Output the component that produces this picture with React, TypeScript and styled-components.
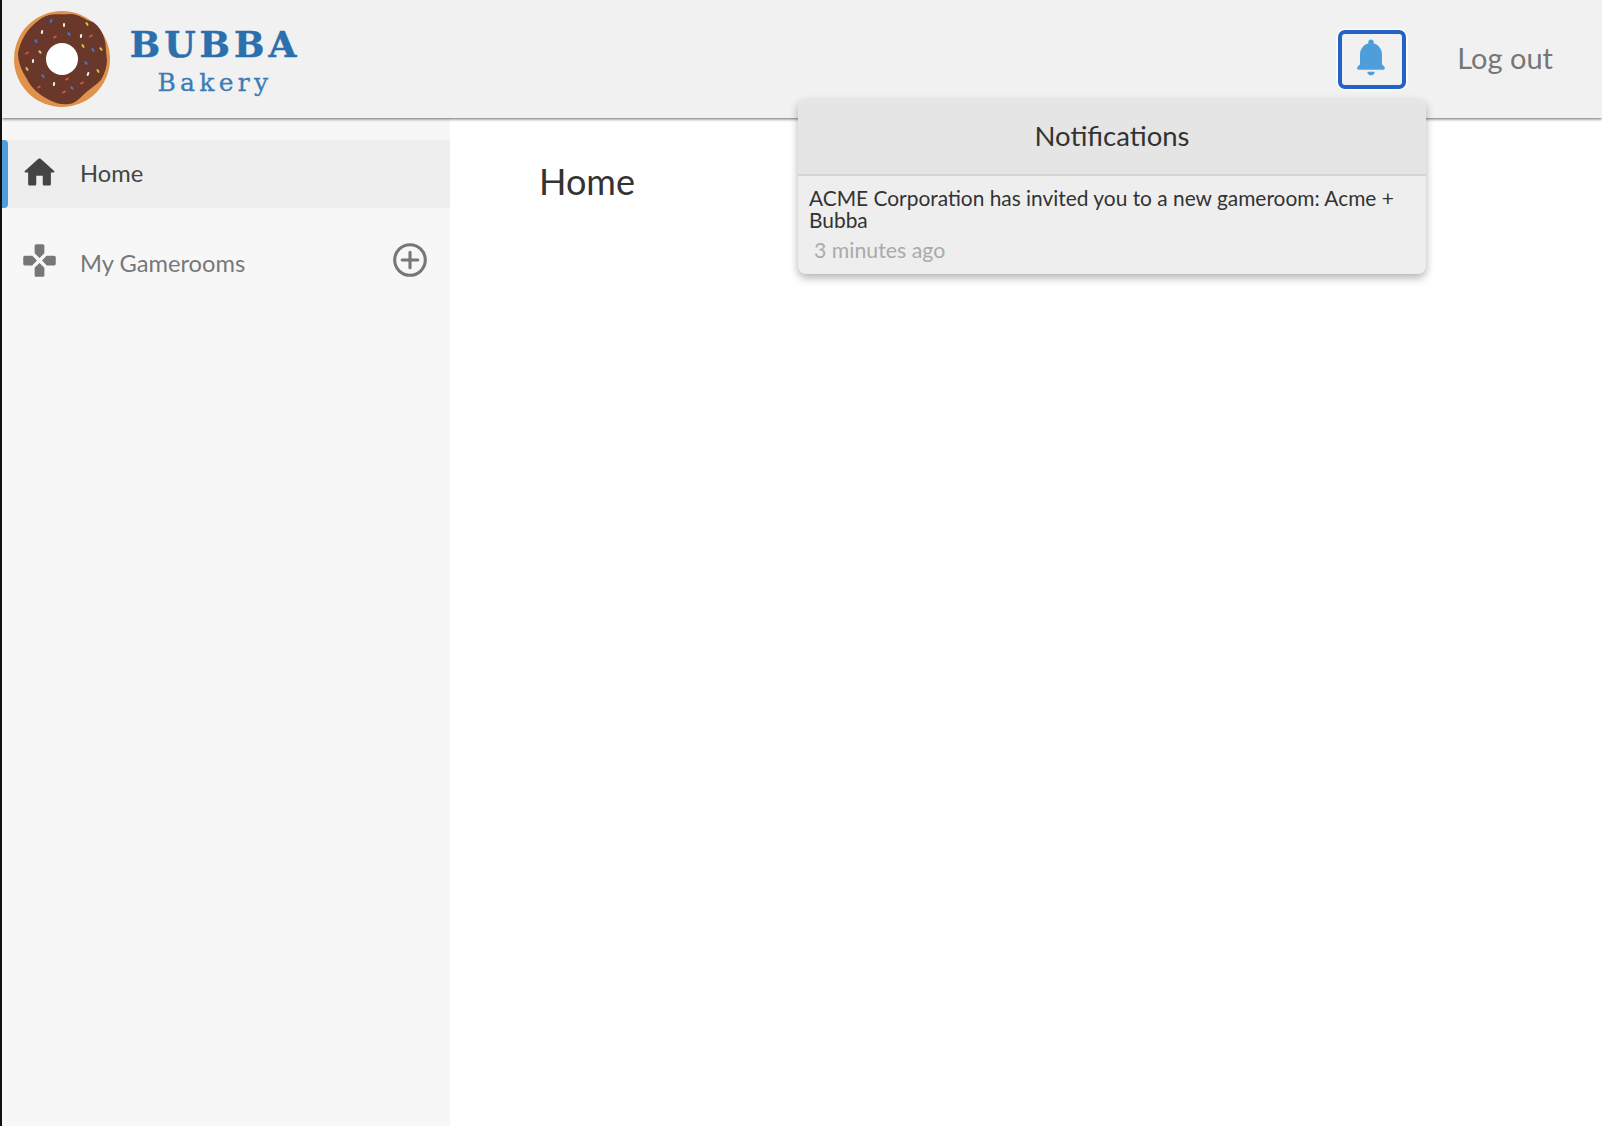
import React from "react";
import styled, { createGlobalStyle } from "styled-components";

const Global = createGlobalStyle`
  html, body { margin: 0; padding: 0; height: 100%; background: #fff; }
  body { font-family: Lato, "Open Sans", sans-serif; color: #333; }
  #root { min-height: 100%; }
`;

const Page = styled.div`
  width: 1602px;
  height: 1126px;
  overflow: hidden;
  border-left: 2px solid #111;
  box-sizing: border-box;
  display: flex;
  flex-direction: column;
`;

const Header = styled.header`
  position: relative;
  z-index: 2;
  height: 118px;
  flex: none;
  box-sizing: border-box;
  background: #f1f1f1;
  box-shadow: 0 1px 3px rgba(0, 0, 0, 0.6);
  display: flex;
  align-items: center;
  padding: 0 49px 0 12px;
`;

const Brand = styled.div`
  display: flex;
  align-items: center;
  gap: 20px;
`;

const BrandText = styled.div`
  display: flex;
  flex-direction: column;
  align-items: center;
  color: #2b6fac;
  width: 170px;
  padding-top: 3px;
`;

const BrandName = styled.div`
  font-family: "DejaVu Serif", "Liberation Serif", serif;
  font-weight: 700;
  font-size: 36px;
  line-height: 40px;
  letter-spacing: 4px;
  -webkit-text-stroke: 0.5px #2b6fac;
  white-space: nowrap;
`;

const BrandSub = styled.div`
  font-family: "DejaVu Serif", "Liberation Mono", serif;
  font-size: 25px;
  line-height: 28px;
  margin-top: 5px;
  letter-spacing: 4.3px;
  -webkit-text-stroke: 0.3px #3a7cb8;
  color: #3a7cb8;
`;

const HeaderActions = styled.div`
  margin-left: auto;
  display: flex;
  align-items: center;
  gap: 51px;
`;

const BellButton = styled.button`
  width: 68px;
  height: 59px;
  box-sizing: border-box;
  padding: 0 2px 4px 0;
  background: #f1f1f1;
  border: 4px solid #2562c6;
  border-radius: 7px;
  box-shadow: 0 0 0 1.5px #fff;
  display: flex;
  align-items: center;
  justify-content: center;
  color: #4f9edc;
`;

const LogOut = styled.span`
  font-size: 29px;
  color: #777;
  line-height: 34px;
  margin-top: -2px;
`;

const Popup = styled.div`
  position: absolute;
  z-index: 3;
  top: 99px;
  left: 798px;
  width: 628px;
  border-radius: 8px;
  overflow: hidden;
  background: #eeeeee;
  box-shadow: 0 4px 8px rgba(0, 0, 0, 0.3);
`;

const PopupHeader = styled.div`
  height: 77px;
  box-sizing: border-box;
  padding-bottom: 2px;
  background: #e5e5e5;
  border-bottom: 2px solid #d4d4d4;
  display: flex;
  align-items: center;
  justify-content: center;
  font-size: 27.5px;
  color: #333;
`;

const PopupBody = styled.div`
  padding: 11px 12px 11px 11px;
  height: 98px;
  box-sizing: border-box;
`;

const Message = styled.div`
  font-size: 20.9px;
  line-height: 22px;
  color: #333;
`;

const TimeAgo = styled.div`
  margin: 7px 0 0 5px;
  font-size: 21.3px;
  line-height: 24px;
  color: #aaa;
`;

const Columns = styled.div`
  flex: 1;
  display: flex;
  min-height: 0;
`;

const Sidebar = styled.nav`
  width: 448px;
  flex: none;
  background: #f7f7f7;
  padding-top: 22px;
  box-sizing: border-box;
`;

const NavRow = styled.div<{ $active?: boolean }>`
  position: relative;
  height: 68px;
  display: flex;
  align-items: center;
  gap: 21px;
  padding: 0 23px 2px 18px;
  box-sizing: border-box;
  background: ${(p) => (p.$active ? "#eeeeee" : "transparent")};
  color: ${(p) => (p.$active ? "#444" : "#777")};
  margin-bottom: 22px;
  font-size: 23.7px;
`;

const ActiveMark = styled.span`
  position: absolute;
  left: 0;
  top: 0;
  bottom: 0;
  width: 6px;
  background: #4f9edc;
  border-radius: 0 4px 4px 0;
`;

const NavIcon = styled.svg<{ $lift: number }>`
  width: 39px;
  height: 39px;
  fill: currentColor;
  flex: none;
  margin-top: ${(p) => -p.$lift}px;
`;

const AddIcon = styled.svg`
  width: 34px;
  height: 34px;
  margin-left: auto;
  margin-top: -6px;
  fill: none;
  stroke: #777;
  stroke-width: 2.2;
  stroke-linecap: round;
  flex: none;
`;

const Main = styled.main`
  flex: 1;
  padding: 41px 89px;
`;

const Title = styled.h1`
  margin: 0;
  font-size: 36px;
  line-height: 44px;
  font-weight: 400;
  color: #333;
`;

const Bell = () => (
  <svg width="44" height="44" viewBox="0 0 24 24" fill="currentColor">
    <path d="M12 22c1.1 0 2-.9 2-2h-4c0 1.1.9 2 2 2zm6-6v-5c0-3.07-1.64-5.64-4.5-6.32V4c0-.83-.67-1.5-1.5-1.5s-1.5.67-1.5 1.5v.68C7.63 5.36 6 7.92 6 11v5l-1.29 1.29c-.63.63-.19 1.71.7 1.71h13.17c.89 0 1.34-1.08.71-1.71L18 16z" />
  </svg>
);

const sprinkles: [number, number, number, string][] = [
  [51, 22, 20, "#4a78c8"], [64, 26, 0, "#f4f0e8"], [87, 25, -30, "#d9c24a"], [42, 33, 10, "#f4f0e8"],
  [69, 35, -40, "#4a78c8"], [55, 38, 60, "#d8553f"], [81, 37, 10, "#f4f0e8"], [91, 37, 60, "#d8553f"],
  [36, 42, -40, "#4a78c8"], [83, 47, -30, "#d9c24a"], [93, 51, -30, "#4a78c8"], [101, 50, -40, "#d9c24a"],
  [27, 54, 60, "#d8553f"], [40, 53, -40, "#d9c24a"], [33, 62, 10, "#f4f0e8"], [86, 64, -40, "#4a78c8"],
  [27, 70, -30, "#d9c24a"], [98, 72, -30, "#d9c24a"], [88, 75, 20, "#f4f0e8"], [43, 77, -40, "#4a78c8"],
  [67, 80, 60, "#d8553f"], [54, 85, 10, "#f4f0e8"], [82, 84, 60, "#d8553f"], [72, 89, -40, "#4a78c8"],
  [39, 88, 60, "#d8553f"], [64, 93, 60, "#d8553f"],
];

const Donut = () => (
  <svg width="96" height="96" viewBox="14 12 96 96">
    <circle cx="62" cy="60" r="48" fill="#e0924a" />
    <path
      d="M46 17 C54 14 62 16 70 15 C80 15 84 21 93 23 C99 27 103 34 105 42 C106 48 106 55 107 61 C107 67 105 74 101 81 C97 85 94 87 89 91 C82 96 76 105 69 105 C58 107 47 100 41 96 C35 92 29 85 27 80 C22 72 18 64 18 54 C20 44 25 34 31 28 C36 23 41 19 46 17 Z"
      fill="#69382a"
    />
    <circle cx="62" cy="60" r="16" fill="#fff" />
    {sprinkles.map(([x, y, r, c], i) => (
      <rect key={i} x={x - 1} y={y - 2} width="2" height="4" rx="1" fill={c} transform={`rotate(${r} ${x} ${y})`} />
    ))}
  </svg>
);

export default function App() {
  return (
    <Page>
      <Global />
      <Header>
        <Brand>
          <Donut />
          <BrandText>
            <BrandName>BUBBA</BrandName>
            <BrandSub>Bakery</BrandSub>
          </BrandText>
        </Brand>
        <HeaderActions>
          <BellButton aria-label="Notifications">
            <Bell />
          </BellButton>
          <LogOut>Log out</LogOut>
        </HeaderActions>
      </Header>
      <Popup>
        <PopupHeader>Notifications</PopupHeader>
        <PopupBody>
          <Message>ACME Corporation has invited you to a new gameroom: Acme + Bubba</Message>
          <TimeAgo>3 minutes ago</TimeAgo>
        </PopupBody>
      </Popup>
      <Columns>
        <Sidebar>
          <NavRow $active>
            <ActiveMark />
            <NavIcon $lift={2} viewBox="0 0 24 24">
              <path d="M10 19v-5h4v5c0 .55.45 1 1 1h3c.55 0 1-.45 1-1v-7h1.7c.46 0 .68-.57.33-.87L12.67 3.6c-.38-.34-.96-.34-1.34 0l-8.36 7.53c-.34.3-.13.87.33.87H5v7c0 .55.45 1 1 1h3c.55 0 1-.45 1-1z" />
            </NavIcon>
            Home
          </NavRow>
          <NavRow>
            <NavIcon $lift={5} viewBox="0 0 24 24">
              <path d="M15 7.29V3c0-.55-.45-1-1-1h-4c-.55 0-1 .45-1 1v4.29c0 .13.05.26.15.35l2.5 2.5c.2.2.51.2.71 0l2.5-2.5c.09-.09.14-.21.14-.35zM7.29 9H3c-.55 0-1 .45-1 1v4c0 .55.45 1 1 1h4.29c.13 0 .26-.05.35-.15l2.5-2.5c.2-.2.2-.51 0-.71l-2.5-2.5C7.55 9.05 7.43 9 7.29 9zM9 16.71V21c0 .55.45 1 1 1h4c.55 0 1-.45 1-1v-4.29c0-.13-.05-.26-.15-.35l-2.5-2.5c-.2-.2-.51-.2-.71 0l-2.5 2.5c-.09.09-.14.21-.14.35zM16.35 9.15l-2.5 2.5c-.2.2-.2.51 0 .71l2.5 2.5c.09.09.22.15.35.15H21c.55 0 1-.45 1-1v-4c0-.55-.45-1-1-1h-4.29c-.14 0-.26.05-.36.15z" />
            </NavIcon>
            My Gamerooms
            <AddIcon viewBox="0 0 24 24">
              <circle cx="12" cy="12" r="10.8" />
              <path d="M12 6.5v11M6.5 12h11" />
            </AddIcon>
          </NavRow>
        </Sidebar>
        <Main>
          <Title>Home</Title>
        </Main>
      </Columns>
    </Page>
  );
}
